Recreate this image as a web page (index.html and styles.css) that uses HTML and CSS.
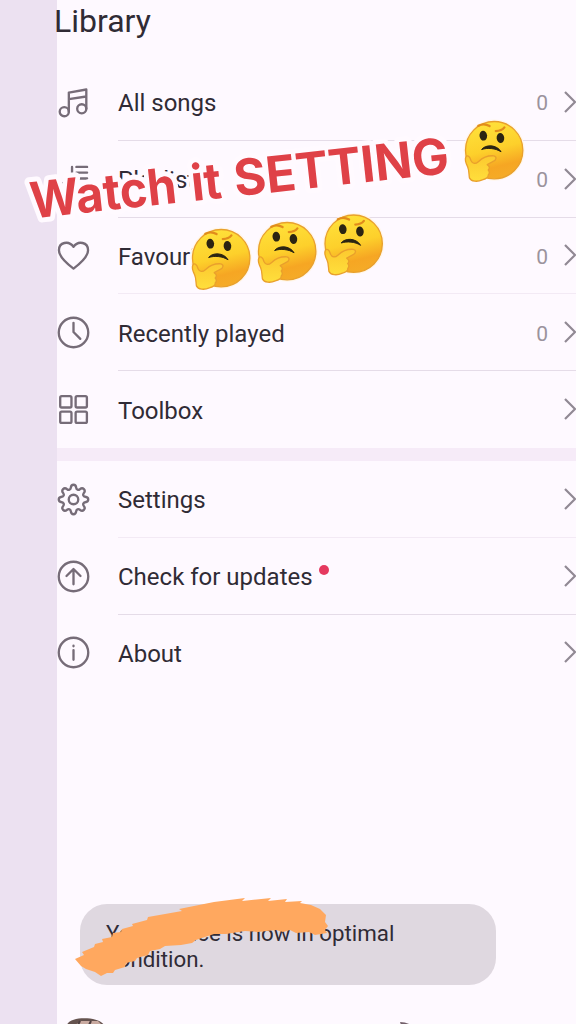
FILE: index.html
```html
<!DOCTYPE html>
<html lang="en">
<head>
<meta charset="utf-8">
<title>Library</title>
<link rel="stylesheet" href="styles.css">
</head>
<body>
<div class="screen">
  <aside class="edge"></aside>
  <main class="page">
    <h1 class="title">Library</h1>
    <section class="group">
      <div class="row">
        <svg class="icon" viewBox="0 0 34 34"><circle cx="7.5" cy="26.5" r="4.7"/><circle cx="25.5" cy="23.5" r="4.7"/><path d="M12.2 26.5V6.8L30.2 3.6V23.5M12.2 13.6L30.2 10.8"/></svg>
        <div class="cell"><span class="label">All songs</span><span class="count">0</span><svg class="chevron" viewBox="0 0 12 24"><path d="M1 2L11 12L1 22"/></svg></div>
      </div>
      <div class="row">
        <svg class="icon" viewBox="0 0 34 34"><path d="M20 4H31M20 10H31M20 16H31M15.5 4V26"/><circle cx="9.5" cy="25" r="5.5"/></svg>
        <div class="cell"><span class="label">Playlists</span><span class="count">0</span><svg class="chevron" viewBox="0 0 12 24"><path d="M1 2L11 12L1 22"/></svg></div>
      </div>
      <div class="row">
        <svg class="icon" viewBox="0 0 34 34"><path d="M17 30.5C11 26 2 19 2 11.5C2 3.5 12 1 17 8C22 1 32 3.5 32 11.5C32 19 23 26 17 30.5Z"/></svg>
        <div class="cell faint"><span class="label">Favourites</span><span class="count">0</span><svg class="chevron" viewBox="0 0 12 24"><path d="M1 2L11 12L1 22"/></svg></div>
      </div>
      <div class="row">
        <svg class="icon" viewBox="0 0 34 34"><circle cx="17" cy="17" r="15.2"/><path d="M17 7V16.5L24 23.5"/></svg>
        <div class="cell"><span class="label">Recently played</span><span class="count">0</span><svg class="chevron" viewBox="0 0 12 24"><path d="M1 2L11 12L1 22"/></svg></div>
      </div>
      <div class="row">
        <svg class="icon" viewBox="0 0 34 34"><rect x="3.3" y="3.3" width="11.6" height="11.6" rx="1.5"/><rect x="19.2" y="3.3" width="11.6" height="11.6" rx="1.5"/><rect x="3.3" y="19.2" width="11.6" height="11.6" rx="1.5"/><rect x="19.2" y="19.2" width="11.6" height="11.6" rx="1.5"/></svg>
        <div class="cell last"><span class="label">Toolbox</span><svg class="chevron" viewBox="0 0 12 24"><path d="M1 2L11 12L1 22"/></svg></div>
      </div>
    </section>
    <div class="band"></div>
    <section class="group">
      <div class="row">
        <svg class="icon" viewBox="0 0 34 34"><circle cx="17" cy="17" r="4.9"/><path d="M17 1.8C19 1.8 19.6 3 19.8 5C20 7 22 7.6 23.6 6.4C25.2 5.1 26.4 5 27.7 6.3C29 7.6 28.9 8.8 27.6 10.4C26.4 12 27 14 29 14.2C31 14.4 32.2 15 32.2 17C32.2 19 31 19.6 29 19.8C27 20 26.4 22 27.6 23.6C28.9 25.2 29 26.4 27.7 27.7C26.4 29 25.2 28.9 23.6 27.6C22 26.4 20 27 19.8 29C19.6 31 19 32.2 17 32.2C15 32.2 14.4 31 14.2 29C14 27 12 26.4 10.4 27.6C8.8 28.9 7.6 29 6.3 27.7C5 26.4 5.1 25.2 6.4 23.6C7.6 22 7 20 5 19.8C3 19.6 1.8 19 1.8 17C1.8 15 3 14.4 5 14.2C7 14 7.6 12 6.4 10.4C5.1 8.8 5 7.6 6.3 6.3C7.6 5 8.8 5.1 10.4 6.4C12 7.6 14 7 14.2 5C14.4 3 15 1.8 17 1.8Z"/></svg>
        <div class="cell faint"><span class="label">Settings</span><svg class="chevron" viewBox="0 0 12 24"><path d="M1 2L11 12L1 22"/></svg></div>
      </div>
      <div class="row">
        <svg class="icon" viewBox="0 0 34 34"><circle cx="17" cy="17" r="15.2"/><path d="M17 25V9.5M9.8 16.5L17 9.3L24.2 16.5"/></svg>
        <div class="cell"><span class="label">Check for updates</span><i class="dot"></i><svg class="chevron" viewBox="0 0 12 24"><path d="M1 2L11 12L1 22"/></svg></div>
      </div>
      <div class="row">
        <svg class="icon" viewBox="0 0 34 34"><circle cx="17" cy="17" r="15.2"/><path d="M17 14.5V24.5M17 10V10.6"/></svg>
        <div class="cell last"><span class="label">About</span><svg class="chevron" viewBox="0 0 12 24"><path d="M1 2L11 12L1 22"/></svg></div>
      </div>
    </section>
    <div class="toast">Your device is now in optimal<br>condition.</div>
  </main>
  <svg class="stickers" viewBox="0 0 576 1024">
    <defs>
      <linearGradient id="face" x1=".3" y1="0" x2=".55" y2="1"><stop offset="0" stop-color="#ffe23b"/><stop offset=".5" stop-color="#fdd02b"/><stop offset=".8" stop-color="#f6a623"/><stop offset="1" stop-color="#f5ab27"/></linearGradient>
      <linearGradient id="hand" x1="0" y1="0" x2="0" y2="1"><stop offset="0" stop-color="#fcc92f"/><stop offset="1" stop-color="#ffdf3c"/></linearGradient>
      <symbol id="thinking" viewBox="27 32 183 185" overflow="visible">
        <circle cx="119" cy="119" r="93" fill="#fff6ea"/>
        <circle cx="119" cy="119" r="87" fill="url(#face)" stroke="#e9a02c" stroke-width="4"/>
        <path d="M71 45Q88 36 105 46M124 61Q142 61 150 50" fill="none" stroke="#e18c1b" stroke-width="7" stroke-linecap="round"/>
        <ellipse cx="86" cy="75" rx="11.5" ry="15" fill="#2b2412" transform="rotate(-6 86 75)"/>
        <ellipse cx="138" cy="82" rx="11.5" ry="15" fill="#2b2412" transform="rotate(-6 138 82)"/>
        <path d="M81 117C92 101 127 101 140 124C124 113 98 111 81 117Z" fill="#2b2412" stroke="#2b2412" stroke-width="3" stroke-linejoin="round"/>
        <path d="M33 140C38 132 45 138 49 151C54 162 63 161 72 153C86 140 105 135 118 136C128 138 126 149 116 153L98 163C107 169 105 175 101 179C106 185 104 191 101 194C103 203 94 206 83 209C68 216 49 214 44 203C42 190 43 179 38 168C33 158 29 149 33 140Z" fill="url(#hand)" stroke="#e9a02c" stroke-width="4" stroke-linejoin="round"/>
      </symbol>
    </defs>
    <g class="caption" transform="translate(32 218.5) rotate(-6.2)">
      <text x="0" y="0" textLength="147" lengthAdjust="spacingAndGlyphs">Watch</text>
      <text x="162" y="0" textLength="30" lengthAdjust="spacingAndGlyphs">it</text>
      <text x="205" y="0" textLength="216" lengthAdjust="spacingAndGlyphs">SETTING</text>
    </g>
    <use href="#thinking" x="463.5" y="121.5" width="61" height="61"/>
    <use href="#thinking" x="190.5" y="229.5" width="61" height="61"/>
    <use href="#thinking" x="256.5" y="222.5" width="61" height="61"/>
    <use href="#thinking" x="323" y="215" width="61" height="61"/>
    <path class="marker" d="M75 959L84 955L82 952L94 947L95 944L103 942L102 939L112 937L113 933L121 932L122 929L133 926L132 924L147 920L148 917L182 911L179 909L214 902L245 898L242 901L271 898L268 901L287 899L285 902L302 901L300 903L311 905L320 909L326 915L325 922L328 926L325 930L327 933L315 935L309 932L296 933L290 930L283 932L276 930L258 932L245 931L226 934L214 934L196 940L192 943L181 945L165 946L160 949L150 951L148 955L137 958L135 961L126 963L125 967L115 970L113 973L107 973L101 976L95 972L86 969L81 966Z"/>
    <path d="M67 1025C69 1016 99 1016 104 1025Z" fill="#65534f"/><path d="M75 1025L81 1021L98 1021L102 1025Z" fill="#c9aaa0"/><path d="M78 1025L80 1021M89 1025L91 1021" stroke="#4d3f40" stroke-width="2"/>
    <path d="M400 1022Q406 1022 411 1025H401Z" fill="#73606a"/>
  </svg>
</div>
</body>
</html>
```
FILE: styles.css
```css
* { box-sizing: border-box; }
body { margin: 0; background: #fef9ff; font-family: Roboto, "Liberation Sans", sans-serif; color: #302b35; }
.screen { position: relative; display: grid; grid-template-columns: 57px 1fr; width: 576px; height: 1024px; overflow: hidden; }
.edge { background: #ece1f1; }
.page { background: #fef9ff; }
.title { margin: 0 0 0 -3px; height: 64px; padding-top: 1px; font-size: 32px; line-height: 40px; font-weight: 400; }
.row { display: flex; align-items: center; height: 76.8px; }
.icon { width: 33px; height: 33px; flex: none; margin-right: 28px; fill: none; stroke: #766c78; stroke-width: 2.4; stroke-linecap: round; stroke-linejoin: round; }
.cell { flex: 1; height: 100%; display: flex; align-items: center; border-bottom: 1px solid #e5dce8; }
.cell.faint { border-color: #f3eaf5; }
.cell.last { border-color: transparent; }
.label { padding-top: 3px; font-size: 24px; line-height: 32px; }
.count { margin-left: auto; margin-right: 16px; padding-top: 3px; font-size: 21px; color: #9b939d; }
.chevron { width: 12px; height: 24px; margin-left: auto; fill: none; stroke: #918994; stroke-width: 2.2; }
.count + .chevron { margin-left: 0; }
.dot { width: 10px; height: 10px; margin: -12px 0 0 6px; border-radius: 50%; background: #e5395f; }
.band { height: 13px; background: #f6ebf8; }
.toast { width: 416px; height: 81px; margin: 212.6px 0 0 23px; padding: 16px 26px; border-radius: 27px; background: #dfd8e0; font-size: 22.3px; line-height: 26px; }
.stickers { position: absolute; inset: 0; width: 576px; height: 1024px; }
.caption { font-family: Inter, "Open Sans", sans-serif; font-size: 50px; font-weight: 700; fill: #df4147; stroke: #fffaff; stroke-width: 10px; stroke-linejoin: round; paint-order: stroke; }
.marker { fill: #ffa85f; }
```
